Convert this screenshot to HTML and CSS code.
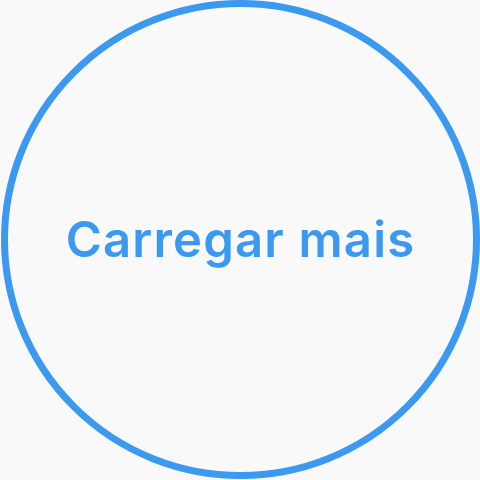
FILE: index.html
```html
<!DOCTYPE html>
<html lang="pt">
<head>
<meta charset="utf-8">
<link rel="stylesheet" href="styles.css">
</head>
<body>
<div class="stage">
  <button class="load-more">Carregar mais</button>
</div>
</body>
</html>
```
FILE: styles.css
```css
html, body {
  margin: 0;
  padding: 0;
  background: #f9f9fa;
}
.stage {
  width: 480px;
  height: 480px;
  display: flex;
  align-items: flex-start;
  justify-content: center;
}
.load-more {
  box-sizing: border-box;
  width: 479px;
  height: 479px;
  margin-left: 1px;
  border-radius: 50%;
  border: 7px solid #3b99f0;
  background: transparent;
  color: #3b99f0;
  font-family: Inter, "Noto Sans", sans-serif;
  font-weight: 600;
  font-size: 49px;
  letter-spacing: 1.2px;
  padding: 0;
  display: flex;
  align-items: center;
  justify-content: center;
}
```
